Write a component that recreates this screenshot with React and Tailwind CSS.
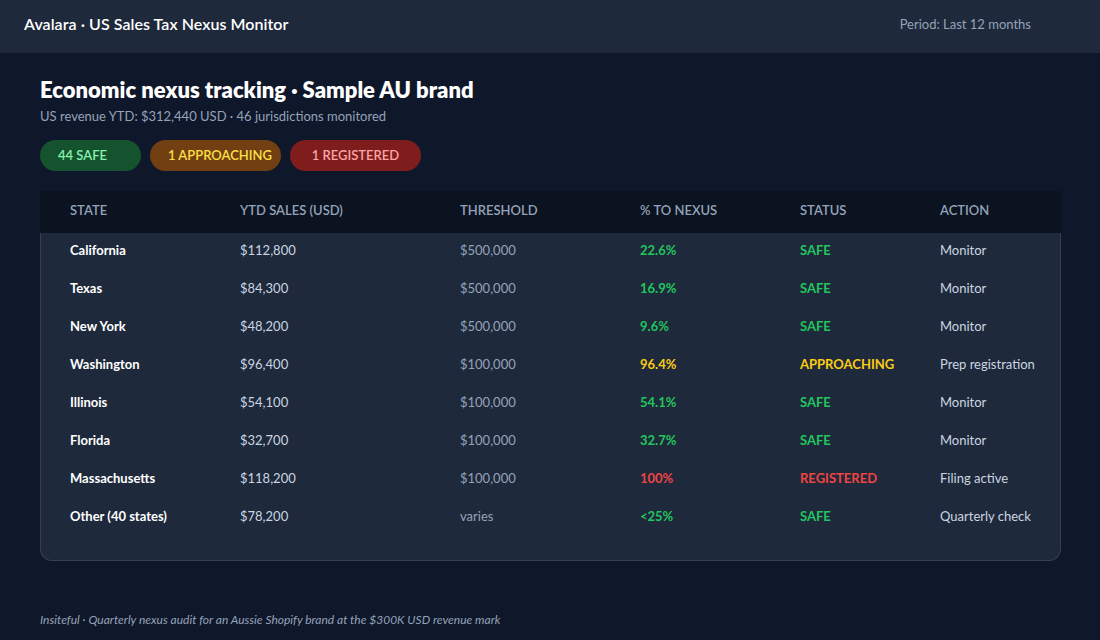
const ROWS = [
  { state: "California", sales: "$112,800", threshold: "$500,000", pct: "22.6%", status: "SAFE", action: "Monitor", tone: "text-[#22c55e]" },
  { state: "Texas", sales: "$84,300", threshold: "$500,000", pct: "16.9%", status: "SAFE", action: "Monitor", tone: "text-[#22c55e]" },
  { state: "New York", sales: "$48,200", threshold: "$500,000", pct: "9.6%", status: "SAFE", action: "Monitor", tone: "text-[#22c55e]" },
  { state: "Washington", sales: "$96,400", threshold: "$100,000", pct: "96.4%", status: "APPROACHING", action: "Prep registration", tone: "text-[#facc15]" },
  { state: "Illinois", sales: "$54,100", threshold: "$100,000", pct: "54.1%", status: "SAFE", action: "Monitor", tone: "text-[#22c55e]" },
  { state: "Florida", sales: "$32,700", threshold: "$100,000", pct: "32.7%", status: "SAFE", action: "Monitor", tone: "text-[#22c55e]" },
  { state: "Massachusetts", sales: "$118,200", threshold: "$100,000", pct: "100%", status: "REGISTERED", action: "Filing active", tone: "text-[#ef4444]" },
  { state: "Other (40 states)", sales: "$78,200", threshold: "varies", pct: "<25%", status: "SAFE", action: "Quarterly check", tone: "text-[#22c55e]" },
];

const GRID = "grid grid-cols-[170px_220px_180px_160px_140px_1fr]";

function Pill({ className, children }) {
  return (
    <div className={`h-[31px] rounded-full flex items-center text-[13px] leading-4 font-semibold pb-[2px] ${className}`}>
      {children}
    </div>
  );
}

export default function App() {
  return (
    <div className="w-[1100px] h-[640px] overflow-hidden flex flex-col bg-[#0f172a] font-['Lato','Liberation_Sans',sans-serif] antialiased">
      <header className="h-[53px] shrink-0 bg-[#1e293b] pl-6 pt-[14px] flex justify-between">
        <h1 className="text-[16px] leading-5 font-semibold tracking-[0.05px] text-white">Avalara · US Sales Tax Nexus Monitor</h1>
        <span className="mr-[69px] text-[13px] leading-4 mt-[2px] text-[#94a3b8]">Period: Last 12 months</span>
      </header>

      <main className="flex-1 pl-10 pt-6 flex flex-col">
        <h2 className="text-[22px] leading-[26px] font-extrabold text-white">Economic nexus tracking · Sample AU brand</h2>
        <p className="mt-[5px] text-[13px] leading-4 text-[#94a3b8]">US revenue YTD: $312,440 USD · 46 jurisdictions monitored</p>

        <div className="mt-4 flex gap-[9px]">
          <Pill className="w-[101px] pl-[18px] bg-[#14532d] text-[#86efac]">44 SAFE</Pill>
          <Pill className="w-[131px] pl-[18px] bg-[#713f12] text-[#fde047]">1 APPROACHING</Pill>
          <Pill className="w-[131px] justify-center bg-[#7f1d1d] text-[#fca5a5]">1 REGISTERED</Pill>
        </div>

        <div className="mt-[20px] w-[1021px]">
          <div className={`${GRID} h-[42px] pl-[30px] pt-[11px] bg-[#0b1220] text-[13px] leading-4 font-semibold text-[#94a3b8]`}>
            <span>STATE</span>
            <span>YTD SALES (USD)</span>
            <span>THRESHOLD</span>
            <span>% TO NEXUS</span>
            <span>STATUS</span>
            <span>ACTION</span>
          </div>
          <div className="rounded-b-xl bg-[#1e293b] border border-t-0 border-[#334155] pb-[23px]">
            {ROWS.map((row) => (
              <div key={row.state} className={`${GRID} h-[38px] pl-[29px] pt-[9px] text-[13px] leading-4`}>
                <span className="font-bold text-white">{row.state}</span>
                <span className="text-[#cbd5e1]">{row.sales}</span>
                <span className="text-[#94a3b8]">{row.threshold}</span>
                <span className={`font-bold ${row.tone}`}>{row.pct}</span>
                <span className={`font-bold ${row.tone}`}>{row.status}</span>
                <span className="text-[#cbd5e1]">{row.action}</span>
              </div>
            ))}
          </div>
        </div>

        <p className="mt-[51px] text-[12px] leading-4 italic text-[#94a3b8]">
          Insiteful · Quarterly nexus audit for an Aussie Shopify brand at the $300K USD revenue mark
        </p>
      </main>
    </div>
  );
}
